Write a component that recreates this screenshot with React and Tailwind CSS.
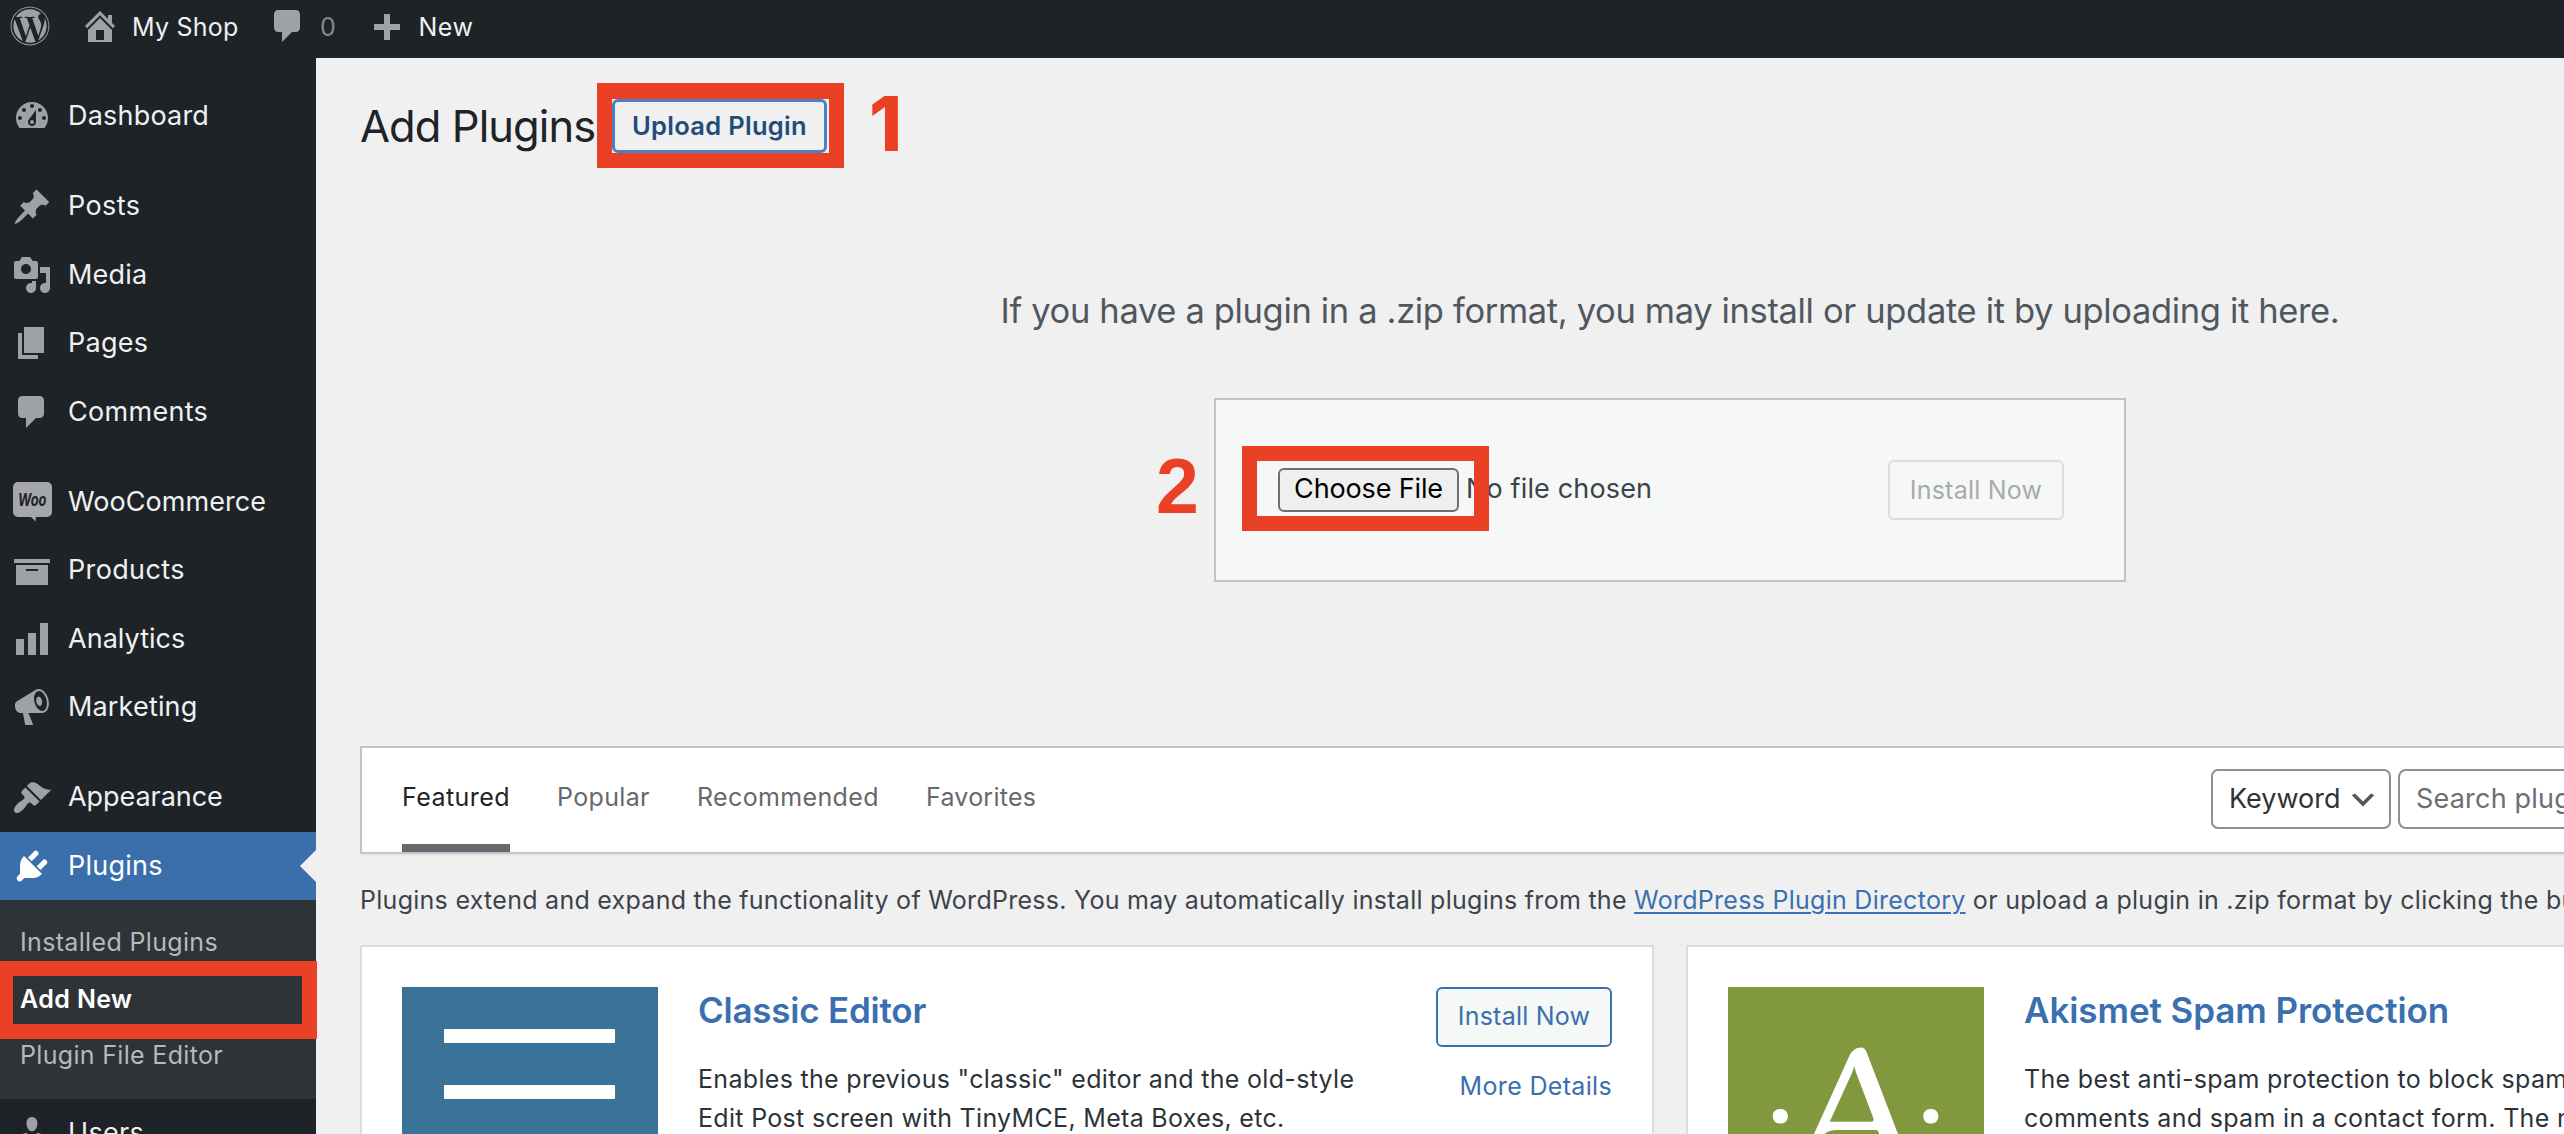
import { FaWordpress } from "react-icons/fa";

const ICONS = {
  dashboard:
    "M3.76 16h12.48c1.1-1.37 1.76-3.11 1.76-5 0-4.42-3.58-8-8-8s-8 3.58-8 8c0 1.89.66 3.63 1.76 5zM10 4c.55 0 1 .45 1 1s-.45 1-1 1-1-.45-1-1 .45-1 1-1zM6 6c.55 0 1 .45 1 1s-.45 1-1 1-1-.45-1-1 .45-1 1-1zm8 0c.55 0 1 .45 1 1s-.45 1-1 1-1-.45-1-1 .45-1 1-1zm-5.37 5.55L12 7v6c0 1.1-.9 2-2 2s-2-.9-2-2c0-.57.24-1.08.63-1.45zM4 10c.55 0 1 .45 1 1s-.45 1-1 1-1-.45-1-1 .45-1 1-1zm12 0c.55 0 1 .45 1 1s-.45 1-1 1-1-.45-1-1 .45-1 1-1zm-5 3c0-.55-.45-1-1-1s-1 .45-1 1 .45 1 1 1 1-.45 1-1z",
  post: "M10.44 3.02l1.82-1.82 6.36 6.35-1.83 1.82c-1.05-.68-2.48-.57-3.41.36l-.75.75c-.92.93-1.04 2.35-.35 3.41l-1.83 1.82-2.41-2.41-2.8 2.79c-.42.42-3.38 2.71-3.8 2.29s1.86-3.39 2.28-3.81l2.79-2.79L4.1 9.36l1.83-1.82c1.05.69 2.48.57 3.4-.36l.75-.75c.93-.92 1.05-2.35.36-3.41z",
  media:
    "M13 11V4c0-.55-.45-1-1-1h-1.67L9 1H5L3.67 3H2c-.55 0-1 .45-1 1v7c0 .55.45 1 1 1h10c.55 0 1-.45 1-1zM7 4.5c1.38 0 2.5 1.12 2.5 2.5S8.38 9.5 7 9.5 4.5 8.38 4.5 7 5.62 4.5 7 4.5zM14 6h5v10.5c0 1.38-1.12 2.5-2.5 2.5S14 17.88 14 16.5s1.12-2.5 2.5-2.5c.17 0 .34.02.5.05V9h-3V6zm-4 8.05V13h2v3.5c0 1.38-1.12 2.5-2.5 2.5S7 17.88 7 16.5 8.12 14 9.5 14c.17 0 .34.02.5.05z",
  page: "M6 15V2h10v13H6zm-1 1h8v2H3V5h2v11z",
  comment:
    "M5 2h9c1.1 0 2 .9 2 2v7c0 1.1-.9 2-2 2h-2l-5 5v-5H5c-1.1 0-2-.9-2-2V4c0-1.1.9-2 2-2z",
  archive: "M19 4v2H1V4h18zM2 7h16v10H2V7zm11 3V9H7v1h6z",
  chart: "M18 18V2h-4v16h4zm-6 0V7H8v11h4zm-6 0v-8H2v8h4z",
  megaphone:
    "M18.15 5.94c.46 1.62.38 3.22-.02 4.48-.42 1.28-1.26 2.18-2.3 2.48-.16.06-.26.06-.4.06-.06.02-.12.02-.18.02-.06.02-.14.02-.22.02h-6.8l2.22 5.5c.02.14-.06.26-.14.34-.08.1-.24.16-.34.16H6.95c-.1 0-.26-.06-.34-.16-.08-.08-.16-.2-.14-.34l-1-5.5H4.25l-.02-.02c-.5.06-1.08-.18-1.54-.62s-.88-1.08-1.06-1.88c-.24-.8-.2-1.56-.02-2.2.18-.62.58-1.08 1.06-1.3l.02-.02 9-5.4c.1-.06.18-.1.24-.16.06-.04.14-.08.24-.12.16-.08.28-.12.5-.18 1.04-.3 2.24.1 3.22.98s1.84 2.24 2.26 3.86zm-2.58 5.98h-.02c.4-.1.74-.34 1.04-.7.58-.7.86-1.76.86-3.04 0-.64-.1-1.3-.28-1.98-.34-1.36-1.02-2.5-1.78-3.24s-1.68-1.1-2.46-.88c-.82.22-1.4.96-1.7 2-.32 1.04-.28 2.36.06 3.72.38 1.36 1 2.5 1.8 3.24.78.74 1.62 1.1 2.48.88zm-2.54-7.08c.22-.04.42-.02.62.04.38.16.76.48 1.02 1s.42 1.2.42 1.78c0 .3-.04.56-.12.8-.18.48-.44.84-.86.94-.34.1-.8-.06-1.14-.4s-.64-.86-.78-1.5c-.18-.62-.12-1.24.02-1.72s.48-.84.82-.94z",
  brush:
    "M14.48 11.06L7.41 3.99l1.5-1.5c.5-.56 2.3-.47 3.51.32 1.21.8 1.43 1.28 2.91 2.1 1.18.64 2.45 1.26 4.45.85zm-.71.71L6.7 4.7 4.93 6.47c-.39.39-.39 1.02 0 1.41l1.06 1.06c.39.39.39 1.03 0 1.42-.6.6-1.43 1.11-2.21 1.69-.35.26-.7.53-1.01.84C1.43 14.23.4 16.08 1.4 17.07c.99 1 2.84-.03 4.18-1.36.31-.31.58-.66.85-1.02.57-.78 1.08-1.61 1.69-2.21.39-.39 1.02-.39 1.41 0l1.06 1.06c.39.39 1.02.39 1.41 0z",
  plug: "M13.11 4.36L9.87 7.6 8 5.73l3.24-3.24c.35-.34 1.05-.2 1.56.32.52.51.66 1.21.31 1.55zm-8 1.77l.91-1.12 9.01 9.01-1.19.84c-.71.71-2.63 1.16-3.82 1.16H6.14L4.9 17.26c-.59.59-1.54.59-2.12 0-.59-.58-.59-1.53 0-2.12l1.24-1.24v-3.88c0-1.13.4-3.19 1.09-3.89zm7.26 3.97l3.24-3.24c.34-.35 1.04-.21 1.55.31.52.51.66 1.21.31 1.55l-3.24 3.25z",
  user: "M10 9.25c-2.27 0-2.73-3.44-2.73-3.44C7 4.02 7.82 2 9.97 2c2.16 0 2.98 2.02 2.71 3.81 0 0-.41 3.44-2.68 3.44zm0 2.57L12.72 10c2.39 0 4.52 2.33 4.52 4.53v2.49s-3.65 1.13-7.24 1.13c-3.65 0-7.24-1.13-7.24-1.13v-2.49c0-2.25 1.94-4.48 4.47-4.48z",
  home: "M16 8.5l1.53 1.53-1.06 1.06L10 4.6l-6.47 6.49-1.06-1.06L10 2.5l4 4v-2h2v4zm-6-2.46l6 5.99V18H4v-5.97zM12 17v-5H8v5h4z",
  plus: "M17 9v3h-5v5H9v-5H4V9h5V4h3v5h5z",
};

function Dashicon({ name }) {
  return (
    <svg viewBox="0 0 20 20" className="size-10 shrink-0 fill-current">
      <path fillRule="evenodd" d={ICONS[name]} />
    </svg>
  );
}

function WooIcon() {
  return (
    <svg viewBox="0 0 40 40" className="size-10 shrink-0 text-[#a5a7ab]">
      <path
        fill="currentColor"
        d="M6 0h29a5 5 0 0 1 5 5v25a5 5 0 0 1-5 5H23.700v4.500L19 35H6a5 5 0 0 1-5-5V5a5 5 0 0 1 5-5z"
      />
      <text
        x="6"
        y="23.500"
        textLength="28.500"
        lengthAdjust="spacingAndGlyphs"
        className="fill-[#1e2327] font-['Inter'] text-[17.5px] font-bold italic"
      >
        Woo
      </text>
    </svg>
  );
}

function MenuItem({ icon, label, tracking, active }) {
  return (
    <div
      className={`relative flex h-[68.4px] shrink-0 items-center pl-3 ${
        active ? "bg-[#3b6fab] text-white" : "text-[#9ea2a8]"
      }`}
    >
      {icon === "woo" ? <WooIcon /> : <Dashicon name={icon} />}
      <span className={`ml-4 text-[27px] ${tracking} ${active ? "text-white" : "text-[#f0f0f1]"}`}>{label}</span>
      {active && (
        <span className="absolute right-0 top-[18px] border-y-[16px] border-r-[16px] border-y-transparent border-r-[#f0f0f0]" />
      )}
    </div>
  );
}

function Sidebar() {
  return (
    <nav className="flex w-[316px] shrink-0 flex-col bg-[#1e2327] pt-6">
      <MenuItem icon="dashboard" label="Dashboard" tracking="tracking-[0.2px]" />
      <div className="mt-[22px]">
        <MenuItem icon="post" label="Posts" tracking="tracking-[0.4px]" />
        <MenuItem icon="media" label="Media" tracking="tracking-[0.2px]" />
        <MenuItem icon="page" label="Pages" tracking="tracking-[0.25px]" />
        <MenuItem icon="comment" label="Comments" tracking="tracking-[0.3px]" />
      </div>
      <div className="mt-[22px]">
        <MenuItem icon="woo" label="WooCommerce" tracking="tracking-[0.06px]" />
        <MenuItem icon="archive" label="Products" tracking="tracking-[0.36px]" />
        <MenuItem icon="chart" label="Analytics" tracking="tracking-[0.03px]" />
        <MenuItem icon="megaphone" label="Marketing" tracking="tracking-[0.16px]" />
      </div>
      <div className="mt-[22px]">
        <MenuItem icon="brush" label="Appearance" tracking="tracking-[-0.05px]" />
        <MenuItem icon="plug" label="Plugins" tracking="tracking-[0.25px]" active />
        <div className="flex h-[198.800px] flex-col bg-[#2e3337] pl-5 pt-[14px] text-[25px] text-[#b5b9bd]">
          <span className="py-[10px] leading-[36.4px] tracking-[0.34px]">Installed Plugins</span>
          <span className="relative py-[10px] font-semibold leading-[36.4px] tracking-[0.4px] text-white">
            Add New
            <span className="absolute -left-[22px] -top-[10px] h-[78px] w-[319px] border-[15px] border-[#ea4025]" />
          </span>
          <span className="py-[10px] leading-[36.4px] tracking-[0.32px]">Plugin File Editor</span>
        </div>
        <MenuItem icon="user" label="Users" tracking="tracking-[0.3px]" />
      </div>
    </nav>
  );
}

function AdminBar() {
  return (
    <header className="flex h-[58px] shrink-0 items-start bg-[#1e2327] pl-[10px] pt-[6px] text-[25px] leading-[42px] text-[#f0f0f1]">
      <FaWordpress className="size-10 text-[#9ea2a8]" />
      <div className="ml-[30.4px] flex w-[187.600px] text-[#9ea2a8]">
        <Dashicon name="home" />
        <span className="ml-[11.600px] tracking-[0.25px] text-[#f0f0f1]">My Shop</span>
      </div>
      <div className="flex w-[98.500px] text-[#9ea2a8]">
        <Dashicon name="comment" />
        <span className="ml-3 text-[#85898e]">0</span>
      </div>
      <div className="flex text-[#9ea2a8]">
        <Dashicon name="plus" />
        <span className="ml-3 tracking-[0.5px] text-[#f0f0f1]">New</span>
      </div>
    </header>
  );
}

function UploadPanel() {
  return (
    <section className="flex flex-col items-center">
      <p className="mt-[131px] text-[34.5px] leading-[54px] tracking-[-0.35px] text-[#50575e]">
        If you have a plugin in a .zip format, you may install or update it by uploading it here.
      </p>
      <div className="relative mt-[60px] flex h-[184px] w-[912px] items-center border-2 border-[#c3c4c7] bg-[#f6f8f7] pl-[62px] pr-[60px]">
        <span className="absolute -left-[60px] top-[42px] font-['Liberation_Sans'] text-[77px] font-bold leading-[88px] text-[#ea4025]">
          2
        </span>
        <button className="h-11 w-[181px] rounded-[6px] border-2 border-[#6f6f70] bg-[#efefef] pb-[2px] text-[27px] leading-[38px] tracking-[-0.14px] text-black">
          Choose File
        </button>
        <span className="ml-[7px] pb-[2px] text-[27px] tracking-[0.15px] text-[#3c434a]">No file chosen</span>
        <span className="absolute left-[26px] top-[46px] h-[85px] w-[247px] border-[15px] border-[#ea4025]" />
        <button className="ml-auto h-[60px] w-[176px] rounded-[6px] border-2 border-[#dcdcde] pt-[1px] text-[25px] tracking-[0.22px] text-[#a7aaad]">
          Install Now
        </button>
      </div>
    </section>
  );
}

function FilterBar() {
  return (
    <div className="mt-[164px] flex h-[108px] items-center border-2 border-[#c3c4c7] bg-white pl-10 pr-[42px] shadow-[0_2px_2px_rgba(0,0,0,0.04)]">
      <div className="flex gap-[47px] self-stretch text-[25px] leading-[38px] text-[#646970]">
        <span className="w-[108px] border-b-8 border-[#646970] pt-[30px] tracking-[0.45px] text-[#1d2327]">Featured</span>
        <span className="w-[93px] pt-[30px] tracking-[0.35px]">Popular</span>
        <span className="w-[182px] pt-[30px] tracking-[0.36px]">Recommended</span>
        <span className="pt-[30px] tracking-[0.25px]">Favorites</span>
      </div>
      <div className="ml-auto flex gap-[7px] pb-[2px] text-[27px]">
        <div className="flex h-[60px] w-[180px] items-center rounded-[7px] border-2 border-[#8c8f94] pl-4 text-[#2c3338]">
          Keyword
          <svg viewBox="0 0 20 20" className="ml-[6px] mt-px size-8 fill-[#555]">
            <path d="M5 6l5 5 5-5 2 1-7 7-7-7 2-1z" />
          </svg>
        </div>
        <div className="flex h-[60px] w-[538px] items-center rounded-[8px] border-2 border-[#8c8f94] pl-4 tracking-[0.2px] text-[#6a6e75]">
          Search plugins...
        </div>
      </div>
    </div>
  );
}

function ClassicEditorLogo() {
  return (
    <div className="flex size-64 shrink-0 flex-col gap-[42px] bg-[#3b7298] pl-[42px] pt-[42px]">
      <span className="h-[14px] w-[171px] rounded-[1px] bg-white" />
      <span className="h-[14px] w-[171px] rounded-[1px] bg-white" />
      <span className="h-[14px] w-[171px] rounded-[1px] bg-white" />
    </div>
  );
}

function AkismetLogo() {
  return (
    <svg viewBox="0 0 256 256" className="size-64 shrink-0 bg-[#82983f]">
      <path
        fill="#fff"
        fillRule="evenodd"
        d="M86 147L121.300 69C124 63.500 128 60.500 133 60.500C136 60.500 137.300 62 138.500 65L170 147L189 196H171L151 147Q150.500 143 148 143H108Q100 143.500 96.500 147L77 196H65ZM126.300 79C125.500 82.500 124.500 85 123.500 87L101.700 134.700H143.500Q146.500 134.500 145.300 131L129 88Q127 83 126.300 79Z"
      />
      <rect x="44.800" y="122" width="15" height="14.500" rx="6.500" fill="#fff" />
      <rect x="195.300" y="122" width="15" height="14.500" rx="6.500" fill="#fff" />
    </svg>
  );
}

function PluginCard({ logo, title, titleTracking, lines }) {
  return (
    <article className="flex h-[460px] w-[1294px] shrink-0 border-2 border-[#dcdcde] bg-white p-10">
      {logo}
      <div className="ml-10 min-w-0 grow whitespace-nowrap">
        <h3 className={`text-[35px] font-semibold leading-[46px] text-[#3a6fb0] ${titleTracking}`}>{title}</h3>
        <p className="mt-[27px] text-[25px] leading-[39px] tracking-[0.31px] text-[#2c3338]">
          {lines.map((line) => (
            <span key={line} className="block">
              {line}
            </span>
          ))}
        </p>
      </div>
      <div className="flex shrink-0 flex-col items-end text-[25px] text-[#3a6fb0]">
        <button className="h-[60px] w-[176px] rounded-[6px] border-2 border-[#3a6fb0] bg-[#f6f8f7] tracking-[0.22px]">
          Install Now
        </button>
        <a className="mt-5 leading-[38px] tracking-[0.33px]">More Details</a>
      </div>
    </article>
  );
}

export default function App() {
  return (
    <div className="flex h-[1134px] w-[2564px] flex-col overflow-hidden bg-[#f0f0f0] font-['Inter',sans-serif]">
      <AdminBar />
      <div className="flex min-h-0 grow">
        <Sidebar />
        <main className="min-w-0 grow overflow-hidden pl-11">
          <div className="w-[2620px]">
            <div className="flex pt-[41px]">
              <h1 className="w-[252px] whitespace-nowrap text-[43.5px] leading-[54px] tracking-[-0.92px] text-[#1d2327]">
                Add Plugins
              </h1>
              <div className="relative">
                <button className="h-[54px] w-[215px] rounded-[6px] border-[3.5px] border-[#4a80c4] text-[25.5px] font-semibold leading-[46px] tracking-[0.3px] text-[#234c7a]">
                  Upload Plugin
                </button>
                <span className="absolute -left-[15px] -top-4 h-[85px] w-[247px] border-[15px] border-t-[16px] border-[#ea4025]" />
              </div>
              <span className="ml-[42px] mt-[-2px] text-[75px] font-extrabold leading-[54px] text-[#ea4025]">1</span>
            </div>
            <UploadPanel />
            <FilterBar />
            <p className="mt-[27px] whitespace-nowrap text-[25px] leading-[38px] tracking-[0.275px] text-[#3c434a]">
              Plugins extend and expand the functionality of WordPress. You may automatically install plugins from the{" "}
              <a className="text-[#3a6fb0] underline decoration-2 underline-offset-[3px]">WordPress Plugin Directory</a> or
              upload a plugin in .zip format by clicking the button at the top of this page.
            </p>
            <div className="mt-[26px] flex gap-8">
              <PluginCard
                logo={<ClassicEditorLogo />}
                title="Classic Editor"
                titleTracking="tracking-[-0.23px]"
                lines={[
                  'Enables the previous "classic" editor and the old-style',
                  "Edit Post screen with TinyMCE, Meta Boxes, etc.",
                ]}
              />
              <PluginCard
                logo={<AkismetLogo />}
                title="Akismet Spam Protection"
                titleTracking="tracking-[-0.08px]"
                lines={[
                  "The best anti-spam protection to block spam",
                  "comments and spam in a contact form. The most",
                ]}
              />
            </div>
          </div>
        </main>
      </div>
    </div>
  );
}
